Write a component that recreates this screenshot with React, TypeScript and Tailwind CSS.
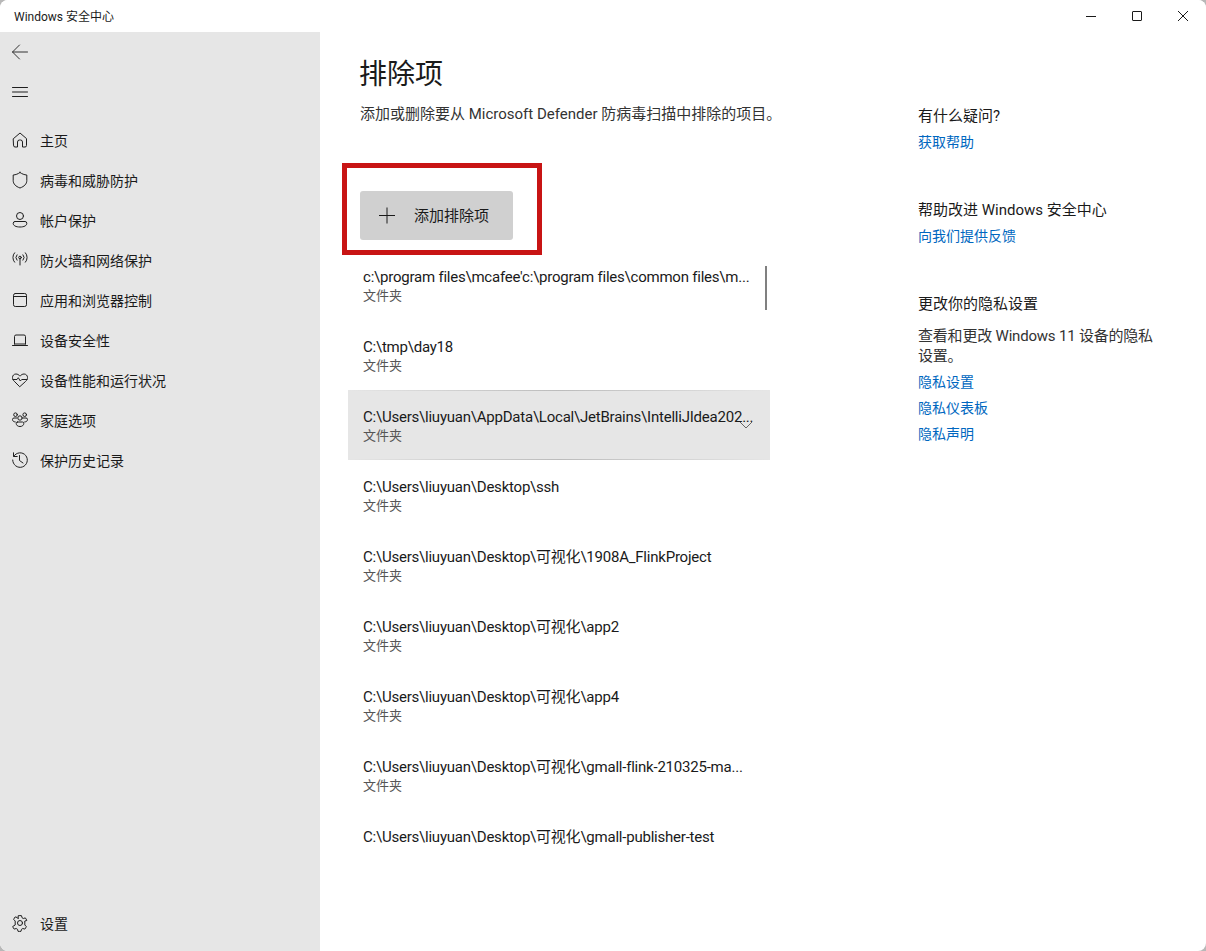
import React from 'react';

const FONT = 'Roboto, "Noto Sans CJK SC", sans-serif';

const Icon: React.FC<{ children: React.ReactNode }> = ({ children }) => (
  <svg width="20" height="20" viewBox="0 0 20 20" fill="none" stroke="#1f1f1f" strokeWidth="1" strokeLinecap="round" strokeLinejoin="round" className="shrink-0">
    {children}
  </svg>
);

const HomeIcon = () => (
  <Icon>
    <path d="M3.500 8.600 10 3l6.500 5.600v6.900a1.500 1.500 0 0 1-1.500 1.500h-2.500v-5a2 2 0 0 0-2-2h-1a2 2 0 0 0-2 2v5H5a1.500 1.500 0 0 1-1.500-1.500z" />
  </Icon>
);
const ShieldIcon = () => (
  <Icon>
    <path d="M10 2.500c2 1.500 4.300 2.300 6.800 2.500v5.500c0 3.400-2.300 5.800-6.800 7.500-4.500-1.700-6.800-4.100-6.800-7.500V5c2.500-.2 4.800-1 6.800-2.500z" />
  </Icon>
);
const UserIcon = () => (
  <Icon>
    <circle cx="10" cy="6" r="3.500" />
    <path d="M5 11.500h10a1.800 1.800 0 0 1 1.800 1.800c0 2.400-2.700 3.700-6.800 3.700s-6.800-1.300-6.800-3.700A1.800 1.800 0 0 1 5 11.500z" />
  </Icon>
);
const AntennaIcon = () => (
  <Icon>
    <circle cx="10" cy="7.500" r="1.300" />
    <path d="M10 8.800V15" />
    <path d="M7 4.800a4 4 0 0 0 0 5.400M13 4.800a4 4 0 0 1 0 5.400" />
    <path d="M4.600 2.800a7 7 0 0 0 0 9.400M15.400 2.800a7 7 0 0 1 0 9.400" />
  </Icon>
);
const WindowIcon = () => (
  <Icon>
    <rect x="3.500" y="3.500" width="13" height="13" rx="1.800" />
    <path d="M3.500 6.500h13" />
  </Icon>
);
const LaptopIcon = () => (
  <Icon>
    <path d="M4.500 14V6.500A1.500 1.500 0 0 1 6 5h8a1.500 1.500 0 0 1 1.500 1.500V14" />
    <path d="M2.500 15.500h15" />
    <path d="M4.500 14h11" />
  </Icon>
);
const PulseIcon = () => (
  <Icon>
    <path d="M4.500 11.500C3.200 10.300 2.500 9.200 2.500 7.500c0-2 1.500-3.500 3.400-3.500 1.700 0 3 .8 4.100 2.200C11.100 4.800 12.400 4 14.100 4c1.900 0 3.400 1.500 3.400 3.500 0 1.700-.7 2.800-2 4L10 16.500z" />
    <path d="M3 9.500h4l1.300-1.800 2 3.300 1.400-1.500h5.300" />
  </Icon>
);
const FamilyIcon = () => (
  <Icon>
    <circle cx="10" cy="8" r="2.200" />
    <circle cx="5.500" cy="4.700" r="1.800" />
    <circle cx="14.700" cy="4.700" r="1.800" />
    <path d="M7.500 12h5a1.300 1.300 0 0 1 1.300 1.300c0 2-1.600 3.200-3.800 3.200s-3.800-1.200-3.800-3.200A1.300 1.300 0 0 1 7.500 12z" />
    <path d="M6.800 8H4a1.500 1.500 0 0 0-1.500 1.500c0 1.400.9 2.300 2.800 2.500M13.200 8H16a1.500 1.500 0 0 1 1.500 1.500c0 1.400-.9 2.300-2.800 2.500" />
  </Icon>
);
const HistoryIcon = () => (
  <Icon>
    <path d="M3.800 6.200A7.300 7.300 0 1 1 2.700 10" />
    <path d="M3.500 2.800v3.700h3.700" />
    <path d="M9.500 5.500V10.500l3.500 2.500" />
  </Icon>
);
const GearIcon = () => (
  <Icon>
    <circle cx="10" cy="10" r="2.500" />
    <path d="M8.500 2.700a7.500 7.500 0 0 1 3 0l.5 2 1.300.8 2-.6a7.500 7.500 0 0 1 1.500 2.600L14.800 8v4l1.500 1.500a7.500 7.500 0 0 1-1.500 2.600l-2-.6-1.300.8-.5 2a7.500 7.500 0 0 1-3 0l-.5-2-1.300-.8-2 .6a7.500 7.500 0 0 1-1.500-2.600L5.200 12V8L3.700 6.500a7.500 7.500 0 0 1 1.500-2.600l2 .6L8 5.500z" />
  </Icon>
);

const navItems = [
  { label: '主页', icon: <HomeIcon /> },
  { label: '病毒和威胁防护', icon: <ShieldIcon /> },
  { label: '帐户保护', icon: <UserIcon /> },
  { label: '防火墙和网络保护', icon: <AntennaIcon /> },
  { label: '应用和浏览器控制', icon: <WindowIcon /> },
  { label: '设备安全性', icon: <LaptopIcon /> },
  { label: '设备性能和运行状况', icon: <PulseIcon /> },
  { label: '家庭选项', icon: <FamilyIcon /> },
  { label: '保护历史记录', icon: <HistoryIcon /> },
];

const exclusions = [
  { path: "c:\\program files\\mcafee'c:\\program files\\common files\\m...", type: '文件夹' },
  { path: 'C:\\tmp\\day18', type: '文件夹' },
  { path: 'C:\\Users\\liuyuan\\AppData\\Local\\JetBrains\\IntelliJIdea202...', type: '文件夹', active: true },
  { path: 'C:\\Users\\liuyuan\\Desktop\\ssh', type: '文件夹' },
  { path: 'C:\\Users\\liuyuan\\Desktop\\可视化\\1908A_FlinkProject', type: '文件夹' },
  { path: 'C:\\Users\\liuyuan\\Desktop\\可视化\\app2', type: '文件夹' },
  { path: 'C:\\Users\\liuyuan\\Desktop\\可视化\\app4', type: '文件夹' },
  { path: 'C:\\Users\\liuyuan\\Desktop\\可视化\\gmall-flink-210325-ma...', type: '文件夹' },
  { path: 'C:\\Users\\liuyuan\\Desktop\\可视化\\gmall-publisher-test', type: '' },
];

const NavRow: React.FC<{ icon: React.ReactNode; label?: string }> = ({ icon, label }) => (
  <div className={`flex h-10 items-center pl-[10px] text-sm text-[#1a1a1a] ${label ? 'pb-[2px]' : ''}`}>
    {icon}
    {label && <span className="ml-[10px] pt-[2px]">{label}</span>}
  </div>
);

export default function App() {
  return (
    <div className="h-[951px] w-[1206px] overflow-hidden bg-[#b8b8b8]" style={{ fontFamily: FONT }}>
      <div className="flex h-full flex-col overflow-hidden rounded-[8px] bg-white">
        {/* Title bar */}
        <div className="flex h-8 shrink-0 items-center justify-between bg-white">
          <span className="pl-[14px] pt-[2px] text-xs text-[#1a1a1a]">Windows 安全中心</span>
          <div className="flex h-8">
            <div className="flex w-[46px] items-center justify-center">
              <div className="h-px w-[10px] bg-[#1a1a1a]" />
            </div>
            <div className="flex w-[46px] items-center justify-center">
              <div className="h-[10px] w-[10px] rounded-[1px] border border-[#1a1a1a]" />
            </div>
            <div className="flex w-[46px] items-center justify-center">
              <svg width="10" height="10" viewBox="0 0 10 10" stroke="#1a1a1a" strokeWidth="1">
                <path d="M0 0l10 10M10 0L0 10" />
              </svg>
            </div>
          </div>
        </div>

        <div className="flex min-h-0 flex-1">
          {/* Sidebar */}
          <aside className="flex w-80 shrink-0 flex-col bg-[#e6e6e6] pb-[7px]">
            <NavRow
              icon={
                <Icon>
                  <path d="M2.500 10h15M9.500 3 2.500 10l7 7" stroke="#333333" />
                </Icon>
              }
            />
            <NavRow
              icon={
                <Icon>
                  <path d="M2.500 5.500h15M2.500 10h15M2.500 14.500h15" />
                </Icon>
              }
            />
            <nav className="mt-[9px] flex-1">
              {navItems.map(item => (
                <NavRow key={item.label} icon={item.icon} label={item.label} />
              ))}
            </nav>
            <NavRow icon={<GearIcon />} label="设置" />
          </aside>

          {/* Main */}
          <main className="relative flex min-w-0 flex-1">
            <div className="w-[598px] shrink-0 pl-7 pt-[23px]">
              <h1 className="ml-[11px] text-[28px] leading-10 font-normal text-[#1a1a1a]">排除项</h1>
              <p className="ml-3 mt-[9px] text-[15px] leading-5 text-[#333333]">
                添加或删除要从 Microsoft Defender 防病毒扫描中排除的项目。
              </p>

              <button className="ml-3 mt-[67px] flex h-[49px] w-[153px] items-center rounded-[3px] bg-[#d0d0d0] pl-[18px] text-[15px] text-[#1a1a1a]">
                <svg width="18" height="18" viewBox="0 0 18 18" stroke="#1a1a1a" strokeWidth="1" className="shrink-0">
                  <path d="M9 .5v16M1 8.500h16" />
                </svg>
                <span className="ml-[18px] pt-[2px]">添加排除项</span>
              </button>

              <div className="relative mt-[10px] w-[422px]">
                {exclusions.map(item => (
                  <div
                    key={item.path}
                    className={`relative flex h-[70px] flex-col justify-center pl-[15px] pr-[18px] pt-[2px] ${item.active ? 'bg-[#e6e6e6]' : ''}`}
                  >
                    <div className="whitespace-nowrap text-[15px] leading-5 tracking-[-0.22px] text-[#1a1a1a]">{item.path}</div>
                    <div className="h-[18px] text-[13px] leading-[18px] text-[#555555]">{item.type}</div>
                    {item.active && (
                      <>
                        <div className="absolute inset-x-0 top-0 h-px bg-gradient-to-r from-[#e6e6e6] via-[#bcbcbc] to-[#e6e6e6]" />
                        <div className="absolute inset-x-0 bottom-0 h-px bg-gradient-to-r from-[#e6e6e6] via-[#bcbcbc] to-[#e6e6e6]" />
                        <svg width="14" height="8" viewBox="0 0 14 8" fill="none" stroke="#666666" strokeWidth="1" className="absolute right-[17px] top-[31px]">
                          <path d="M1 1l6 6 6-6" />
                        </svg>
                      </>
                    )}
                  </div>
                ))}
                {/* scrollbar thumb */}
                <div className="absolute right-[3px] top-4 h-11 w-[2px] bg-[#808080]" />
              </div>
            </div>

            {/* Right column */}
            <div className="w-[240px] shrink-0 pt-[74px] text-sm leading-5">
              <div className="text-[15px] text-[#1a1a1a]">有什么疑问?</div>
              <div className="mt-[6px] text-[#0067c0]">获取帮助</div>

              <div className="mt-[48px] text-[15px] text-[#1a1a1a]">帮助改进 Windows 安全中心</div>
              <div className="mt-[6px] text-[#0067c0]">向我们提供反馈</div>

              <div className="mt-[48px] text-[15px] text-[#1a1a1a]">更改你的隐私设置</div>
              <p className="mt-[12px] text-[15px] tracking-[-0.2px] text-[#333333]">
                查看和更改 Windows 11 设备的隐私设置。
              </p>
              <div className="mt-[6px] flex flex-col gap-[6px] text-[#0067c0]">
                <span>隐私设置</span>
                <span>隐私仪表板</span>
                <span>隐私声明</span>
              </div>
            </div>

            {/* Red highlight frame */}
            <div className="pointer-events-none absolute left-[22px] top-[131px] h-[92px] w-[200px] border-[5px] border-[#c81414]" />
          </main>
        </div>
      </div>
    </div>
  );
}
